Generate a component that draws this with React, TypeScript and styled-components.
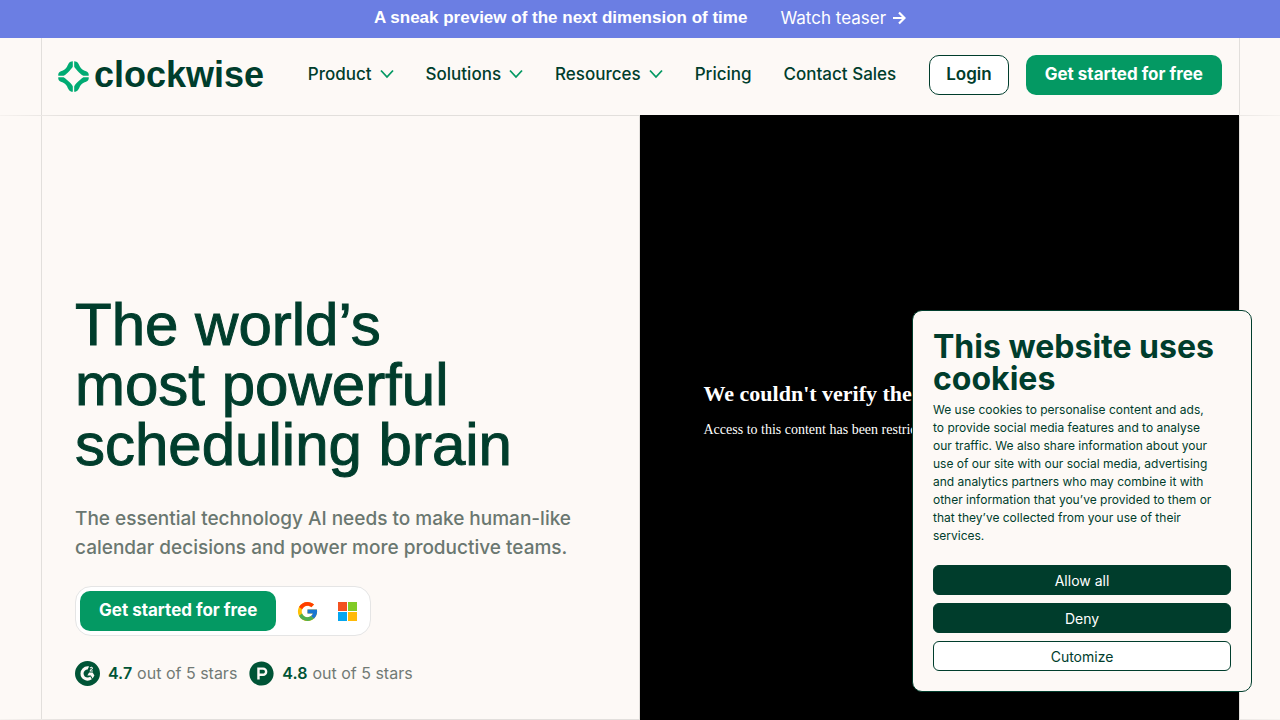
import React from "react";
import styled, { createGlobalStyle } from "styled-components";
import { FcGoogle } from "react-icons/fc";
import { FaProductHunt } from "react-icons/fa";
import { SiG2 } from "react-icons/si";

const GlobalStyle = createGlobalStyle`
  *, *::before, *::after { box-sizing: border-box; }
  body { margin: 0; background: #fdf9f6; color: #003d2c; font-family: Inter, "Liberation Sans", sans-serif; }
  h1, h2, p { margin: 0; }
  a { color: inherit; text-decoration: none; }
  button { font: inherit; cursor: pointer; }
  svg { display: block; flex: none; }
`;

const Page = styled.div`
  min-height: 100vh;
  display: flex;
  flex-direction: column;
`;

const Banner = styled.div`
  height: 38px;
  padding-bottom: 2px;
  display: flex;
  align-items: center;
  justify-content: center;
  gap: 33px;
  background: #6b7ee3;
  color: #fff;
  font-size: 17px;
  line-height: 24px;
`;

const BannerTitle = styled.strong`
  font-family: "Liberation Sans", Arial, sans-serif;
  font-weight: 700;
`;

const BannerLink = styled.a`
  display: flex;
  align-items: center;
  gap: 7px;
`;

const Header = styled.header`
  height: 77px;
  margin: 0 40px 0 41px;
  padding: 0 17px 3px 16px;
  display: flex;
  align-items: center;
  border: solid #e2dfdc;
  border-width: 0 1px;
`;

const Logo = styled.a`
  display: flex;
  align-items: flex-end;
  gap: 5px;
  font: bold 36px/34px "Liberation Sans", Arial, sans-serif;
`;

const Nav = styled.nav`
  margin: 0 33px 0 auto;
  padding-bottom: 2px;
  display: flex;
  align-items: center;
  gap: 32px;
  font-size: 17px;
  font-weight: 500;
  line-height: 24px;
  white-space: nowrap;
`;

const MenuButton = styled.button`
  display: flex;
  align-items: center;
  gap: 8px;
  padding: 0;
  border: 0;
  background: none;
  color: inherit;
`;

const Actions = styled.div`
  display: flex;
  gap: 17px;
`;

const ActionLink = styled.a<{ $outline?: boolean }>`
  height: 40px;
  padding: 0 ${(p) => (p.$outline ? 16 : 19)}px 2px;
  display: flex;
  align-items: center;
  border-radius: 10px;
  border: ${(p) => (p.$outline ? "1px solid #003d2c" : "0")};
  background: ${(p) => (p.$outline ? "#fff" : "#049963")};
  color: ${(p) => (p.$outline ? "#003d2c" : "#fff")};
  font-size: 17px;
  font-weight: ${(p) => (p.$outline ? 600 : 700)};
  white-space: nowrap;
`;

const HeroBand = styled.main`
  flex: 1;
  display: flex;
  padding: 0 40px 0 41px;
  border: solid #e2dfdc;
  border-width: 1px 0;
  border-image: linear-gradient(90deg, #f6f2ef, #e2dfdc 6%, #e2dfdc 94%, #f6f2ef) 1;
`;

const Hero = styled.section`
  flex: 1;
  display: grid;
  grid-template-columns: 1fr calc(50% + 1px);
  border: solid #e2dfdc;
  border-width: 0 1px;
`;

const Intro = styled.div`
  padding: 33px;
  display: flex;
  flex-direction: column;
  justify-content: flex-end;
  align-items: flex-start;
  border-right: 1px solid #e2dfdc;
`;

const Headline = styled.h1`
  font: 400 60px/60px "Liberation Sans", Arial, sans-serif;
  -webkit-text-stroke: 1px currentColor;
`;

const Lead = styled.p`
  margin-top: 29px;
  color: #6a7770;
  font-size: 19px;
  font-weight: 500;
  line-height: 29px;
`;

const SignUp = styled.div`
  margin-top: 24px;
  height: 50px;
  padding: 0 13px 0 4px;
  display: flex;
  align-items: center;
  border: 1px solid #e5e5e5;
  border-radius: 16px;
  background: #fff;
`;

const Providers = styled.div`
  margin-left: 20px;
  display: flex;
  align-items: center;
  gap: 19px;
`;

const Ratings = styled.div`
  margin-top: 24px;
  display: flex;
  gap: 12px;
  color: #005436;
`;

const Rating = styled.div`
  display: flex;
  align-items: center;
  font-size: 16px;
  line-height: 26px;
`;

const Score = styled.strong`
  margin: 0 5px 0 8px;
  font-weight: 600;
`;

const Scale = styled.span`
  color: #717a75;
`;

const Video = styled.div`
  margin: -1px 0;
  padding: 0 0 16px 64px;
  display: flex;
  flex-direction: column;
  align-items: flex-start;
  justify-content: center;
  gap: 12px;
  background: #000;
  color: #fff;
  font-family: "Liberation Serif", "Times New Roman", serif;
  white-space: nowrap;
  overflow: hidden;
`;

const VideoTitle = styled.h2`
  font-size: 22px;
  line-height: 28px;
`;

const VideoText = styled.p`
  font-size: 14px;
  line-height: 20px;
`;

const CookieDialog = styled.div`
  position: fixed;
  right: 28px;
  bottom: 28px;
  width: 340px;
  padding: 20px;
  border: 1px solid #003d2c;
  border-radius: 10px;
  background: #fdf9f6;
`;

const CookieTitle = styled.h2`
  font-size: 32px;
  line-height: 32px;
`;

const CookieText = styled.p`
  max-width: 283px;
  margin: 6px 0 20px;
  font-size: 12px;
  line-height: 18px;
`;

const CookieChoices = styled.div`
  display: grid;
  gap: 8px;
`;

const Choice = styled.button<{ $outline?: boolean }>`
  height: 30px;
  padding: 0;
  border: 1px solid #003d2c;
  border-radius: 6px;
  background: ${(p) => (p.$outline ? "#fff" : "#003d2c")};
  color: ${(p) => (p.$outline ? "#003d2c" : "#fff")};
  font-size: 14px;
`;

const Chevron = () => (
  <svg width="14" height="10" viewBox="0 0 14 10" fill="none" stroke="#049963" strokeWidth="1.8">
    <path d="M1 1.500 7 8l6-6.500" />
  </svg>
);

const Arrow = () => (
  <svg width="13" height="14" viewBox="0 0 13 14" fill="none" stroke="#fff" strokeWidth="2.2">
    <path d="M0 7h11M6 1.500 11.500 7 6 12.500" />
  </svg>
);

const Star = () => (
  <svg width="31" height="31" viewBox="0 0 32 32" fill="#00ab73">
    <path id="petal" d="M15.300 .3V5.800C14.500 7.500 13.500 8.500 12 10 9.500 12.500 8 14 5.800 15.300H.3C0 13 .8 11.500 3 10.700 6 9.700 8 8.500 9.300 6 10.500 3.500 11.500 .3 15.300 .3Z" />
    <use href="#petal" transform="matrix(-1 0 0 1 32 0)" />
    <use href="#petal" transform="matrix(1 0 0 -1 0 32)" />
    <use href="#petal" transform="matrix(-1 0 0 -1 32 32)" />
  </svg>
);

const Microsoft = () => (
  <svg width="19" height="19" viewBox="0 0 19 19">
    <path fill="#f35220" d="M0 0h9v9H0z" />
    <path fill="#81cb26" d="M10 0h9v9h-9z" />
    <path fill="#05a6f0" d="M0 10h9v9H0z" />
    <path fill="#ffba08" d="M10 10h9v9h-9z" />
  </svg>
);

const menus = ["Product", "Solutions", "Resources"];

export default function App() {
  return (
    <Page>
      <GlobalStyle />
      <Banner>
        <BannerTitle>A sneak preview of the next dimension of time</BannerTitle>
        <BannerLink href="#teaser">Watch teaser <Arrow /></BannerLink>
      </Banner>
      <Header>
        <Logo href="#home"><Star />clockwise</Logo>
        <Nav>
          {menus.map((name) => (
            <MenuButton key={name} type="button">{name}<Chevron /></MenuButton>
          ))}
          <a href="#pricing">Pricing</a>
          <a href="#sales">Contact Sales</a>
        </Nav>
        <Actions>
          <ActionLink href="#login" $outline>Login</ActionLink>
          <ActionLink href="#signup">Get started for free</ActionLink>
        </Actions>
      </Header>
      <HeroBand>
        <Hero>
          <Intro>
            <Headline>The world’s<br />most powerful<br />scheduling brain</Headline>
            <Lead>The essential technology AI needs to make human-like<br />calendar decisions and power more productive teams.</Lead>
            <SignUp>
              <ActionLink href="#signup">Get started for free</ActionLink>
              <Providers>
                <a href="#google" aria-label="Google"><FcGoogle size={23} /></a>
                <a href="#microsoft" aria-label="Microsoft"><Microsoft /></a>
              </Providers>
            </SignUp>
            <Ratings>
              <Rating><SiG2 size={25} /><Score>4.7</Score><Scale>out of 5 stars</Scale></Rating>
              <Rating><FaProductHunt size={25} /><Score>4.8</Score><Scale>out of 5 stars</Scale></Rating>
            </Ratings>
          </Intro>
          <Video>
            <VideoTitle>We couldn't verify the security of your connection.</VideoTitle>
            <VideoText>Access to this content has been restricted. Contact your internet service provider for help.</VideoText>
          </Video>
        </Hero>
      </HeroBand>
      <CookieDialog role="dialog" aria-labelledby="cookie-title">
        <CookieTitle id="cookie-title">This website uses cookies</CookieTitle>
        <CookieText>
          We use cookies to personalise content and ads, to provide social media features and to analyse our traffic. We also share information about your use of our site with our social media, advertising and analytics partners who may combine it with other information that you’ve provided to them or that they’ve collected from your use of their services.
        </CookieText>
        <CookieChoices>
          <Choice type="button">Allow all</Choice>
          <Choice type="button">Deny</Choice>
          <Choice type="button" $outline>Cutomize</Choice>
        </CookieChoices>
      </CookieDialog>
    </Page>
  );
}
